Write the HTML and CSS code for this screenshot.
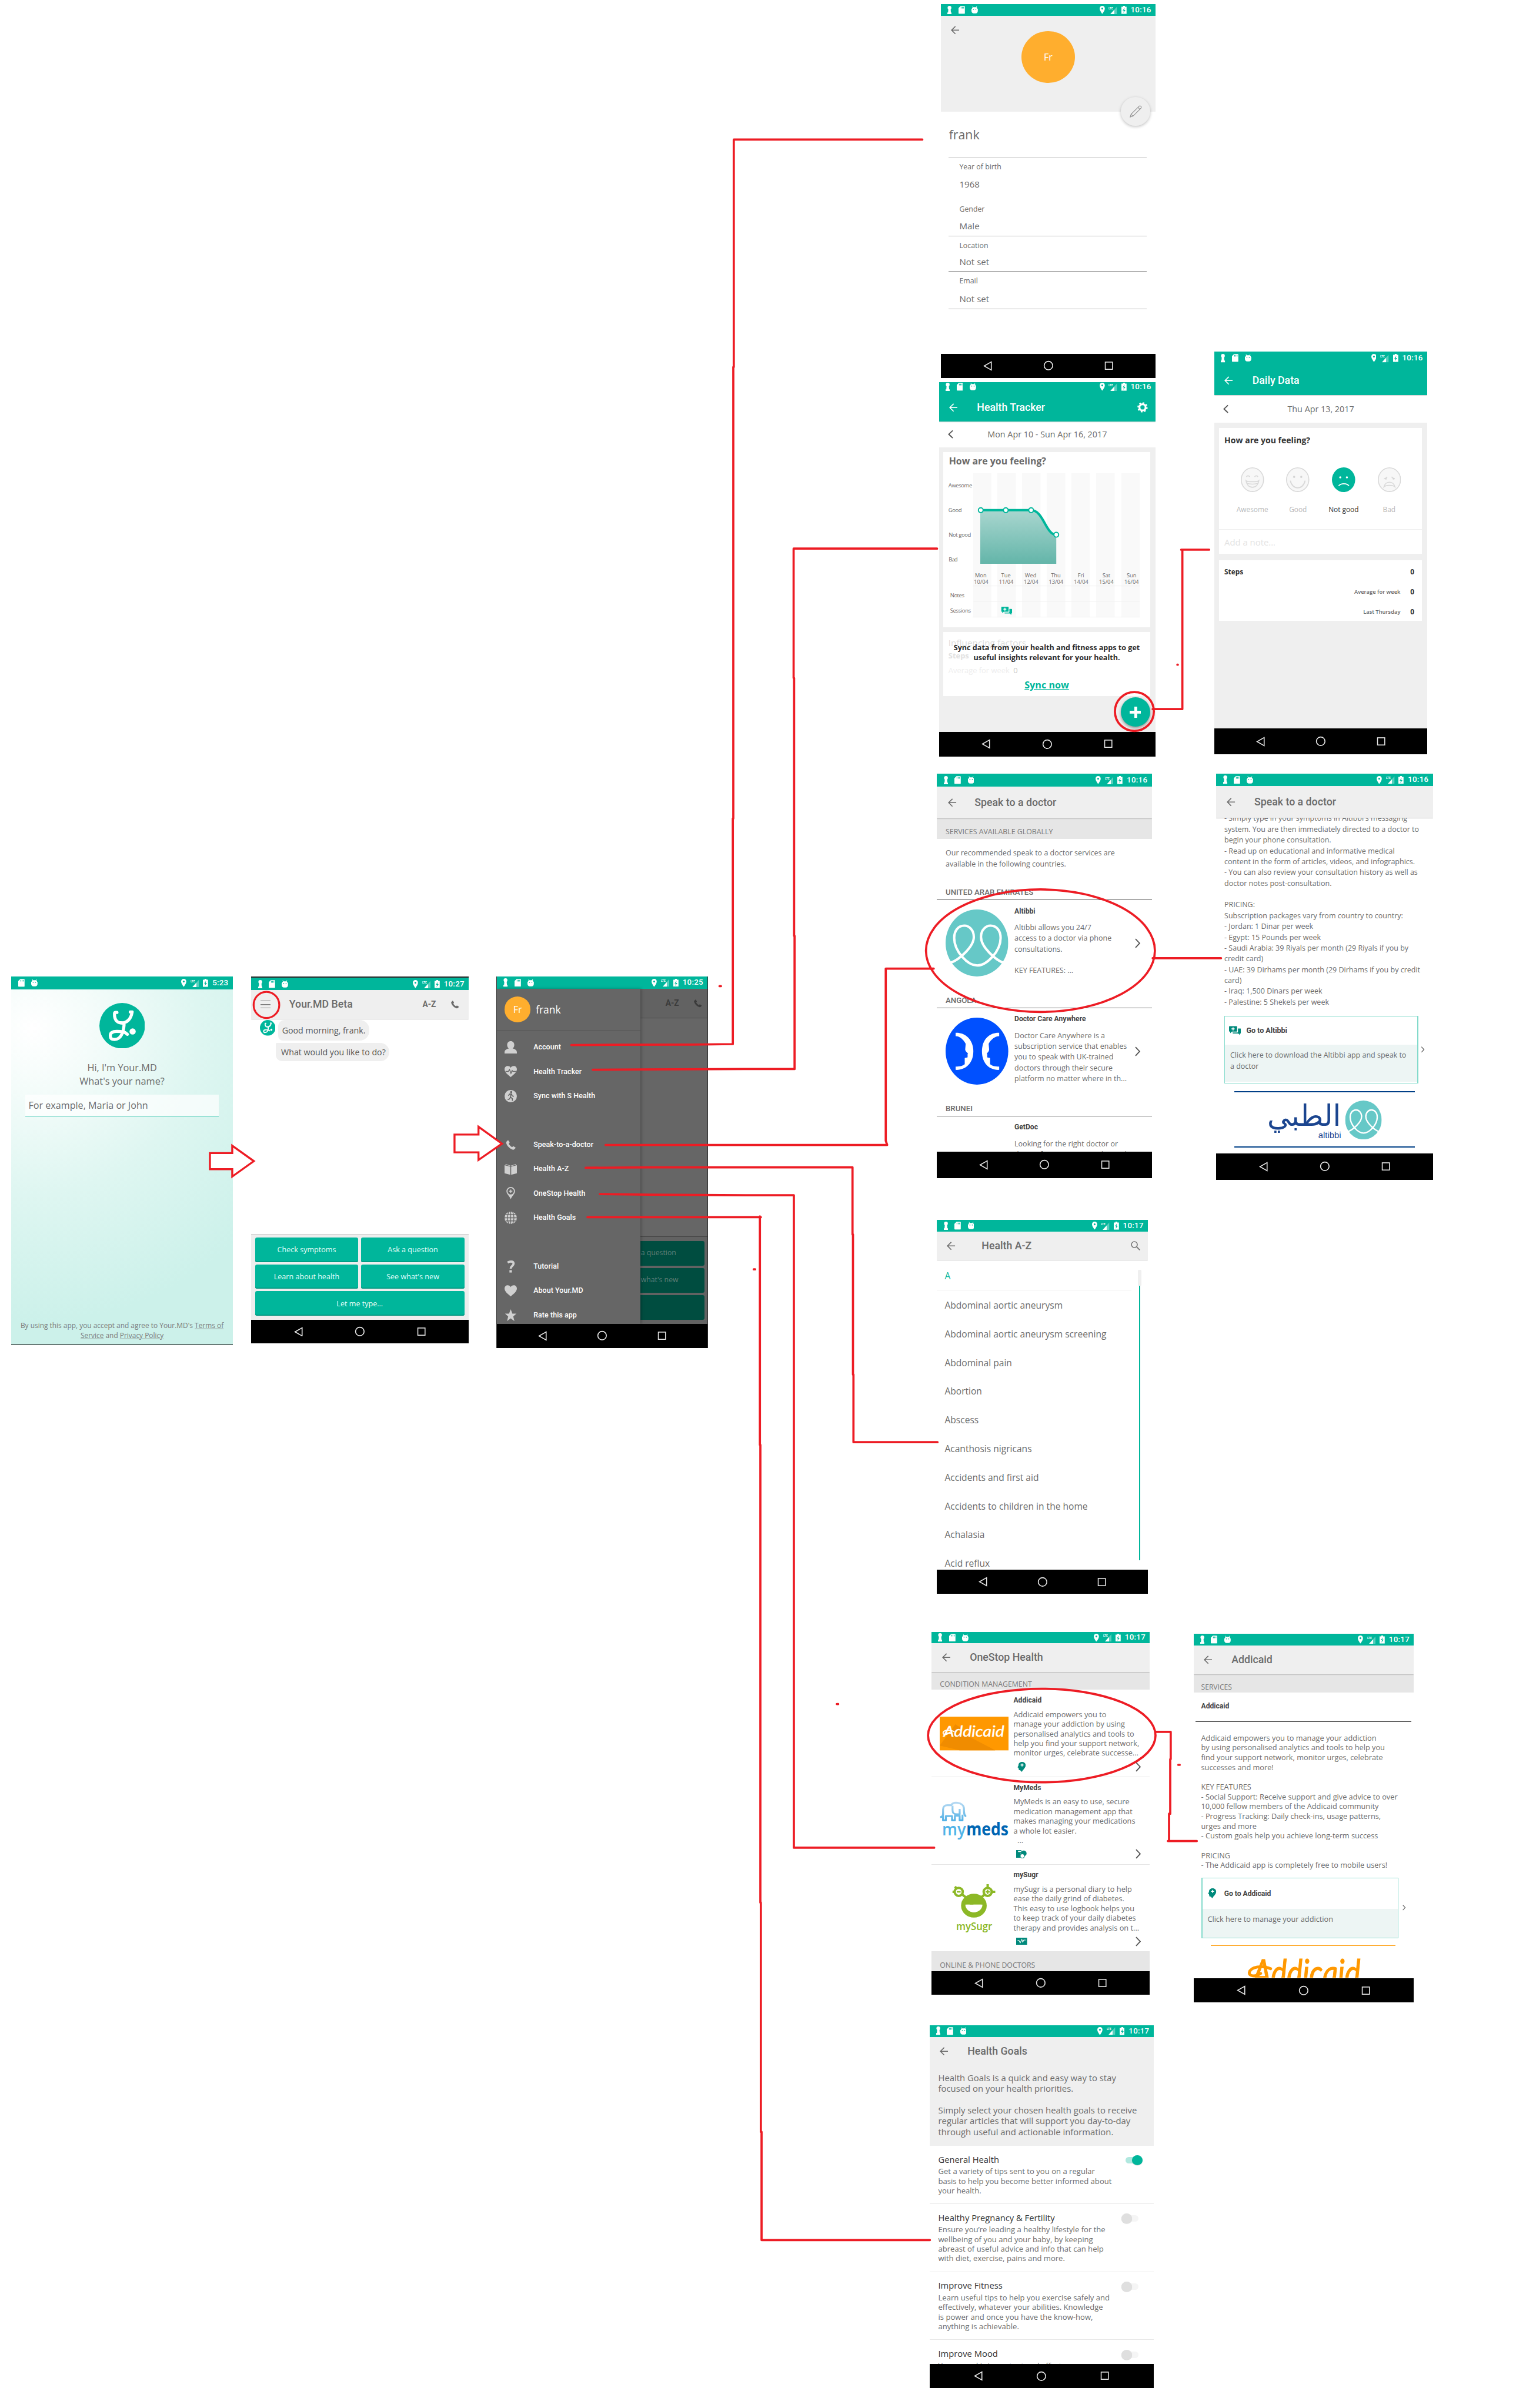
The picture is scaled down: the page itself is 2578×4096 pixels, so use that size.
FILE: index.html
```html
<!DOCTYPE html>
<html lang="en">
<head>
<meta charset="utf-8">
<title>Your.MD screen flow</title>
<link rel="stylesheet" href="styles.css">
</head>
<body>
<svg class="defs" aria-hidden="true">
  <defs>
    <symbol id="key" viewBox="0 0 9 18"><path fill="currentColor" d="M4.500 0a4 4 0 0 1 4 4c0 2-1 3-1.500 3.500L7.500 14H9v4H0v-4h1.500L2 7.500C1.500 7 .5 6 .5 4a4 4 0 0 1 4-4z"/></symbol>
    <symbol id="sd" viewBox="0 0 14 17"><path fill="currentColor" fill-rule="evenodd" d="M4.500 0H13l1 1v15l-1 1H1l-1-1V4.500zM5 2v3.500h1.300V2zm2.800 0v3.500h1.300V2zm2.800 0v3.500h1.300V2z"/></symbol>
    <symbol id="droid" viewBox="0 0 14 17"><path fill="currentColor" fill-rule="evenodd" d="M2.500 0l1.500 2.500h6L11.500 0l.6.500L11 3c1.500.8 2 2 2 3h1v4.500c0 3-2 5.500-5 5.500H5c-3 0-5-2.500-5-5.500V6h1c0-1 .5-2.200 2-3L1.900.5zM3.500 6v2h1.800V6zm5.200 0v2h1.800V6z"/></symbol>
    <symbol id="pin" viewBox="0 0 11 17"><path fill="currentColor" fill-rule="evenodd" d="M5.500 0C8.600 0 11 2.500 11 5.700 11 10 5.500 17 5.500 17S0 10 0 5.700C0 2.500 2.400 0 5.500 0zm0 3.700a2 2 0 1 0 0 4 2 2 0 0 0 0-4z"/></symbol>
    <symbol id="lte" viewBox="0 0 19 18"><path fill="currentColor" opacity=".35" d="M19 1v17H4z"/><path fill="currentColor" d="M13 8v10H4z"/><text x="0" y="8" font-family="Roboto" font-weight="700" font-size="8" fill="currentColor" textLength="10" lengthAdjust="spacingAndGlyphs">LTE</text></symbol>
    <symbol id="bat" viewBox="0 0 11 17"><path fill="currentColor" fill-rule="evenodd" d="M3.500 0h4v1.800H11V17H0V1.800h3.500zM6.800 4L2.500 10h2.700L4 15l4.600-6.200H5.800z"/></symbol>
    <symbol id="n-back" viewBox="0 0 19 21"><path fill="none" stroke="#e6e6e6" stroke-width="2" d="M17 2v17L2 10.500z"/></symbol>
    <symbol id="n-home" viewBox="0 0 22 22"><circle cx="11" cy="11" r="9" fill="none" stroke="#e6e6e6" stroke-width="2"/></symbol>
    <symbol id="n-recent" viewBox="0 0 20 20"><rect x="2" y="2" width="16" height="16" fill="none" stroke="#e6e6e6" stroke-width="2"/></symbol>
    <symbol id="back" viewBox="0 0 18 18"><path fill="none" stroke="currentColor" stroke-width="2" d="M17.500 9H2M9.500 1L1.500 9l8 8"/></symbol>
    <symbol id="right" viewBox="0 0 12 22"><path fill="none" stroke="#555" stroke-width="2.400" d="M1 1.500L10 11l-9 9.500"/></symbol>
    <symbol id="left" viewBox="0 0 12 20"><path fill="none" stroke="#555" stroke-width="2.600" d="M11 1.500L2 10l9 8.500"/></symbol>
    <symbol id="phone" viewBox="0 0 20 20"><path fill="currentColor" d="M1 3.500L3.500 1c.6-.5 1.200-.3 1.600.3l2 3.200c.4.700.2 1.200-.3 1.800L5.600 7.600c1.500 3 3.800 5.300 6.800 6.800l1.300-1.200c.6-.5 1.100-.7 1.800-.3l3.200 2c.6.4.8 1 .3 1.600L16.500 19c-.8.800-2 .8-3.200.4C7 17 3 13 .6 6.700.2 5.500.2 4.300 1 3.500z"/></symbol>
    <symbol id="chat" viewBox="0 0 25 19"><path fill="currentColor" fill-rule="evenodd" d="M1.500 0h14c1 0 1.500.5 1.500 1.500V10c0 1-.5 1.500-1.500 1.500H6L2.500 15v-3.500h-1C.5 11.500 0 11 0 10V1.500C0 .5.500 0 1.500 0zM7.500 2.500v2.300H5.200v2h2.300V9h2V6.800h2.300v-2H9.500V2.500z"/><path fill="currentColor" d="M18.800 5H23.500c1 0 1.500.5 1.500 1.500V14c0 1-.5 1.500-1.500 1.500H23V19l-3.500-3.500H9c-1 0-1.400-.5-1.400-1.500v-.7h9.700c1 0 1.500-.5 1.500-1.500z"/></symbol>
    <symbol id="head" viewBox="0 0 18 22"><path fill="currentColor" fill-rule="evenodd" d="M10 0c5 0 8 3.500 8 7.500 0 4-3 6.500-4.500 9L12 18l-2.500 4L6 18.500l-3-.5-.5-3-.5-2-2-1 2-4C2 3 5 0 10 0zM9 3.500v2.300H6.700v2H9V10h2V7.800h2.300v-2H11V3.500z"/></symbol>
    <symbol id="ymd" viewBox="0 0 96 96"><circle cx="48" cy="48" r="48" fill="#00b69b"/><g fill="none" stroke="#fff" stroke-width="6.500" stroke-linecap="round" stroke-linejoin="round"><path d="M37 20h-3c-3 0-2 4-2 8 1 8 6 14 14 14 11 0 20-6 23-23h-4"/><path d="M46 42c2 0 6 1 6 4-1 14-6 31-20 31-6 0-9-2-9-8 0-7 7-9 14-9 9 0 16 0 22 6"/></g><circle cx="70" cy="60" r="6.500" fill="#fff"/></symbol>
    <symbol id="altibbi" viewBox="0 0 131 141" preserveAspectRatio="none"><ellipse cx="65.500" cy="70.500" rx="65.500" ry="70.500" fill="#66c8c7"/><path fill="none" stroke="#fff" stroke-width="5" d="M11 112c15-5 48-32 48-54 0-15-10-24-20-24-12 0-21 10-21 26 0 28 28 58 48 58s49-30 49-58c0-16-9-26-21-26-10 0-20 9-20 24 0 22 31 48 46 54"/></symbol>
  </defs>
</svg>

<main class="board">

<section class="phone p-welcome">
  <div class="status"><span class="sl"><svg class="i-sd"><use href="#sd"/></svg><svg class="i-sd"><use href="#droid"/></svg></span><span class="sr"><svg class="i-pin"><use href="#pin"/></svg><svg class="i-lte"><use href="#lte"/></svg><svg class="i-pin"><use href="#bat"/></svg><b>5:23</b></span></div>
  <svg class="logo"><use href="#ymd"/></svg>
  <p class="hello">Hi, I'm Your.MD<br>What's your name?</p>
  <div class="name-input">For example, Maria or John</div>
  <p class="terms">By using this app, you accept and agree to Your.MD's <u>Terms of<br>Service</u> and <u>Privacy Policy</u></p>
</section>

<section class="phone p-chat">
  <div class="status"><span class="sl"><svg class="i-key"><use href="#key"/></svg><svg class="i-sd"><use href="#sd"/></svg><svg class="i-sd"><use href="#droid"/></svg></span><span class="sr"><svg class="i-pin"><use href="#pin"/></svg><svg class="i-lte"><use href="#lte"/></svg><svg class="i-pin"><use href="#bat"/></svg><b>10:27</b></span></div>
  <header class="bar"><i class="burger"></i><h1>Your.MD Beta</h1><b class="az">A-Z</b><svg class="i-phone"><use href="#phone"/></svg></header>
  <div class="talk">
    <svg class="avatar"><use href="#ymd"/></svg>
    <div class="bubbles"><p class="b1">Good morning, frank.</p><p class="b2">What would you like to do?</p></div>
  </div>
  <div class="choices"><span>Check symptoms</span><span>Ask a question</span><span>Learn about health</span><span>See what's new</span><span class="wide">Let me type...</span></div>
  <footer class="nav"><svg class="n1"><use href="#n-back"/></svg><svg class="n2"><use href="#n-home"/></svg><svg class="n3"><use href="#n-recent"/></svg></footer>
</section>

<section class="phone p-menu">
  <div class="status"><span class="sl"><svg class="i-key"><use href="#key"/></svg><svg class="i-sd"><use href="#sd"/></svg><svg class="i-sd"><use href="#droid"/></svg></span><span class="sr"><svg class="i-pin"><use href="#pin"/></svg><svg class="i-lte"><use href="#lte"/></svg><svg class="i-pin"><use href="#bat"/></svg><b>10:25</b></span></div>
  <div class="split">
    <div class="drawer">
      <div class="who"><span class="fr">Fr</span>frank</div>
      <ul>
        <li><svg viewBox="0 0 26 26"><path fill="#d0d0d0" d="M13 0c4.500 0 7.500 3 7.500 8 0 3-1.500 6-3.500 7.500 5 1 9 3.500 9 8V26H0v-2.500c0-4.500 4-7 9-8C7 14 5.500 11 5.500 8c0-5 3-8 7.500-8z"/></svg>Account</li>
        <li><svg viewBox="0 0 26 26"><path fill="#d0d0d0" d="M13 25C8 21 0 15 0 8.500 0 4 3.200 1.500 6.500 1.500c3 0 5.500 1.500 6.500 4 1-2.500 3.500-4 6.500-4 3.300 0 6.500 2.500 6.500 7C26 15 18 21 13 25z"/><path fill="none" stroke="#666" stroke-width="1.800" d="M2 13h6l2.500-4 3 8 2.500-6 1.500 2H24"/></svg>Health Tracker</li>
        <li><svg viewBox="0 0 26 26"><circle cx="13" cy="13" r="13" fill="#d0d0d0"/><circle cx="14" cy="4.500" r="2.200" fill="#666"/><path fill="none" stroke="#666" stroke-width="2" d="M8 12l3-3.500h4l1 4 3.500 1M13.500 9l-1 6 4 3.500V23M12.500 15l-2 4-4 1.500"/></svg>Sync with S Health</li>
        <li class="gap"><svg viewBox="0 0 26 26"><g color="#d0d0d0"><use href="#phone" x="3" y="2" width="21" height="22"/></g></svg>Speak-to-a-doctor</li>
        <li><svg viewBox="0 0 26 26"><path fill="#d0d0d0" d="M0 5l12 3v17L0 22zM26 5L14 8v17l12-3zM2 2.500L12.500 6l-1 .5L2 4zM24 2.500L13.500 6l1 .5L24 4z"/></svg>Health A-Z</li>
        <li><svg viewBox="0 0 26 26"><path fill="#d0d0d0" fill-rule="evenodd" d="M13 0a9 9 0 0 1 9 9c0 6-6 9-9 17C10 18 4 15 4 9a9 9 0 0 1 9-9zm0 2.200A6.800 6.800 0 0 0 6.200 9 6.800 6.800 0 0 0 13 15.800 6.800 6.800 0 0 0 19.800 9 6.800 6.800 0 0 0 13 2.200zM12 5.500h2V8h2.500v2H14v2.500h-2V10H9.500V8H12z"/></svg>OneStop Health</li>
        <li><svg viewBox="0 0 26 26"><circle cx="13" cy="13" r="13" fill="#d0d0d0"/><path fill="none" stroke="#666" stroke-width="1.600" d="M13 0v26M0 13h26M2 6.500h22M2 19.500h22M9 0C5.500 8 5.500 18 9 26M17 0c3.500 8 3.500 18 0 26"/></svg>Health Goals</li>
        <li class="gap"><svg viewBox="0 0 26 26"><path fill="none" stroke="#d0d0d0" stroke-width="4.600" d="M6.500 4.500C9 2.800 11 2.300 13.500 2.300c3.500 0 5.500 1.500 5.500 4.500 0 4.500-6 4.500-6 10.700"/><rect x="10.300" y="20.500" width="5.200" height="5" fill="#d0d0d0"/></svg>Tutorial</li>
        <li><svg viewBox="0 0 26 26"><path fill="#d0d0d0" d="M13 25C8 21 0 15 0 8.500 0 4 3.200 1.500 6.500 1.500c3 0 5.500 1.500 6.500 4 1-2.500 3.500-4 6.500-4 3.300 0 6.500 2.500 6.500 7C26 15 18 21 13 25z"/></svg>About Your.MD</li>
        <li><svg viewBox="0 0 26 26"><path fill="#d0d0d0" d="M13 0l3.500 9.300H25l-6.700 6L20.800 25 13 19.300 5.200 25l2.500-9.700L1 9.300h8.500z"/></svg>Rate this app</li>
      </ul>
    </div>
    <div class="dim">
      <div class="dimbar"><b>A-Z</b><svg class="i-phone"><use href="#phone"/></svg></div>
      <div class="dimbtns"><span>a question</span><span>what's new</span><span></span></div>
    </div>
  </div>
  <footer class="nav"><svg class="n1"><use href="#n-back"/></svg><svg class="n2"><use href="#n-home"/></svg><svg class="n3"><use href="#n-recent"/></svg></footer>
</section>

<section class="phone p-profile">
  <div class="status"><span class="sl"><svg class="i-key"><use href="#key"/></svg><svg class="i-sd"><use href="#sd"/></svg><svg class="i-sd"><use href="#droid"/></svg></span><span class="sr"><svg class="i-pin"><use href="#pin"/></svg><svg class="i-lte"><use href="#lte"/></svg><svg class="i-pin"><use href="#bat"/></svg><b>10:16</b></span></div>
  <div class="hero"><svg class="i-back"><use href="#back"/></svg><span class="fr">Fr</span>
    <span class="edit"><svg viewBox="0 0 26 26"><path fill="none" stroke="#8c8c8c" stroke-width="1.300" d="M1 25l2-6L20 2c2-2 6 1 4 4L7 23zM3 19l4 4M17.500 4.500l4 4"/></svg></span>
  </div>
  <h2>frank</h2>
  <dl>
    <div class="f1"><dt>Year of birth</dt><dd>1968</dd></div>
    <div class="f2"><dt>Gender</dt><dd>Male</dd></div>
    <div class="f3"><dt>Location</dt><dd>Not set</dd></div>
    <div class="f4"><dt>Email</dt><dd>Not set</dd></div>
  </dl>
  <footer class="nav"><svg class="n1"><use href="#n-back"/></svg><svg class="n2"><use href="#n-home"/></svg><svg class="n3"><use href="#n-recent"/></svg></footer>
</section>

<section class="phone p-tracker">
  <div class="status"><span class="sl"><svg class="i-key"><use href="#key"/></svg><svg class="i-sd"><use href="#sd"/></svg><svg class="i-sd"><use href="#droid"/></svg></span><span class="sr"><svg class="i-pin"><use href="#pin"/></svg><svg class="i-lte"><use href="#lte"/></svg><svg class="i-pin"><use href="#bat"/></svg><b>10:16</b></span></div>
  <header class="bar green"><svg class="i-back"><use href="#back"/></svg><h1>Health Tracker</h1><svg class="gear" viewBox="0 0 22 22"><circle cx="11" cy="11" r="6.500" fill="none" stroke="#fff" stroke-width="4"/><circle cx="11" cy="11" r="9.300" fill="none" stroke="#fff" stroke-width="3" stroke-dasharray="3.650 3.650"/></svg></header>
  <div class="date"><svg class="i-left"><use href="#left"/></svg><span>Mon Apr 10 - Sun Apr 16, 2017</span></div>
  <div class="cards">
    <div class="card feel">
      <h3>How are you feeling?</h3>
      <svg class="chart" viewBox="9 185 436 331">
        <defs><linearGradient id="mood" x1="0" y1="0" x2="0" y2="1"><stop offset="0" stop-color="#a9d6cf"/><stop offset="1" stop-color="#63b5a9"/></linearGradient></defs>
        <g fill="#f9f9f9"><rect x="72" y="191" width="38" height="304"/><rect x="123" y="191" width="39" height="304"/><rect x="175" y="191" width="39" height="304"/><rect x="227" y="191" width="39" height="304"/><rect x="279" y="191" width="39" height="304"/><rect x="331" y="191" width="39" height="304"/><rect x="384" y="191" width="39" height="304"/></g>
        <path stroke="#eee" stroke-width="1" d="M71 428.500h352M73 461h350M71 494h352"/>
        <path fill="url(#mood)" d="M87 269H194C220 269 225 321 247 321V382H87z"/>
        <path fill="none" stroke="#00b69b" stroke-width="5" d="M88 269H194C220 269 225 321 247 321"/>
        <g fill="#fff" stroke="#00b69b" stroke-width="2.400"><circle cx="88" cy="269" r="5"/><circle cx="140.700" cy="269" r="5"/><circle cx="194" cy="269" r="5"/><circle cx="247" cy="320.700" r="5"/></g>
        <g class="lbl"><text x="20" y="221" textLength="50">Awesome</text><text x="20" y="273" textLength="28">Good</text><text x="20.500" y="325" textLength="47">Not good</text><text x="20.500" y="377" textLength="19">Bad</text><text x="23.500" y="452" textLength="30">Notes</text><text x="23.500" y="485" textLength="44">Sessions</text></g>
        <g class="lbl mid"><text x="88" y="410">Mon</text><text x="89" y="424">10/04</text><text x="141" y="410">Tue</text><text x="141.500" y="424">11/04</text><text x="193" y="410">Wed</text><text x="194" y="424">12/04</text><text x="246" y="410">Thu</text><text x="246.500" y="424">13/04</text><text x="299" y="410">Fri</text><text x="299.500" y="424">14/04</text><text x="352.500" y="410">Sat</text><text x="352.500" y="424">15/04</text><text x="405.500" y="410">Sun</text><text x="405.500" y="424">16/04</text></g>
        <g color="#00b69b"><use href="#chat" x="131" y="472" width="23" height="18"/></g>
      </svg>
    </div>
    <div class="card sync">
      <div class="ghost"><p>Influencing factors</p><b>Steps</b><p class="avg">Average for week <i>0</i></p></div>
      <div class="over"><p>Sync data from your health and fitness apps to get<br>useful insights relevant for your health.</p><a>Sync now</a></div>
    </div>
    <span class="fab"></span>
  </div>
  <footer class="nav"><svg class="n1"><use href="#n-back"/></svg><svg class="n2"><use href="#n-home"/></svg><svg class="n3"><use href="#n-recent"/></svg></footer>
</section>

<section class="phone p-daily">
  <div class="status"><span class="sl"><svg class="i-key"><use href="#key"/></svg><svg class="i-sd"><use href="#sd"/></svg><svg class="i-sd"><use href="#droid"/></svg></span><span class="sr"><svg class="i-pin"><use href="#pin"/></svg><svg class="i-lte"><use href="#lte"/></svg><svg class="i-pin"><use href="#bat"/></svg><b>10:16</b></span></div>
  <header class="bar green"><svg class="i-back"><use href="#back"/></svg><h1>Daily Data</h1></header>
  <div class="date"><svg class="i-left"><use href="#left"/></svg><span>Thu Apr 13, 2017</span></div>
  <div class="cards">
    <div class="card mood">
      <h3>How are you feeling?</h3>
      <div class="faces">
        <div><svg viewBox="0 0 49 52"><ellipse cx="24.500" cy="26" rx="23.500" ry="25" fill="#f7f7f7" stroke="#d9d9d9" stroke-width="2"/><path fill="none" stroke="#d9d9d9" stroke-width="2" d="M12 20c1-3 5-3 7 0M29 20c2-3 6-3 7 0M11 28c3 3 24 3 27 0-1 8-6 14-13.500 14S12 36 11 28zM13 33c4 3 19 3 23 0"/></svg>Awesome</div>
        <div><svg viewBox="0 0 49 52"><ellipse cx="24.500" cy="26" rx="23.500" ry="25" fill="#f7f7f7" stroke="#d9d9d9" stroke-width="2"/><circle cx="17" cy="20" r="2.200" fill="#d4d4d4"/><circle cx="32" cy="20" r="2.200" fill="#d4d4d4"/><path fill="none" stroke="#d9d9d9" stroke-width="2.400" d="M9 28c4 20 27 20 31 0"/></svg>Good</div>
        <div class="on"><svg viewBox="0 0 49 52"><ellipse cx="24.500" cy="26" rx="24.500" ry="26" fill="#00b69b"/><circle cx="17.500" cy="21" r="2.200" fill="#fff"/><circle cx="31.500" cy="21" r="2.200" fill="#fff"/><path fill="none" stroke="#fff" stroke-width="2" d="M14 39c5-6 17-6 22 0"/></svg>Not good</div>
        <div><svg viewBox="0 0 49 52"><ellipse cx="24.500" cy="26" rx="23.500" ry="25" fill="#f7f7f7" stroke="#d9d9d9" stroke-width="2"/><path fill="none" stroke="#d9d9d9" stroke-width="2" d="M13 24c2 0 5-2 7-4M29 20c2 2 4 4 7 4M13 41c3-13 20-13 23 0-4-4-19-4-23 0z"/><circle cx="17" cy="24" r="1.800" fill="#d4d4d4"/><circle cx="33" cy="24" r="1.800" fill="#d4d4d4"/></svg>Bad</div>
      </div>
      <p class="note">Add a note...</p>
    </div>
    <div class="card steps">
      <div class="s0"><b>Steps</b><b>0</b></div>
      <div><span>Average for week</span><b>0</b></div>
      <div><span>Last Thursday</span><b>0</b></div>
    </div>
  </div>
  <footer class="nav"><svg class="n1"><use href="#n-back"/></svg><svg class="n2"><use href="#n-home"/></svg><svg class="n3"><use href="#n-recent"/></svg></footer>
</section>

<section class="phone p-doctor">
  <div class="status"><span class="sl"><svg class="i-key"><use href="#key"/></svg><svg class="i-sd"><use href="#sd"/></svg><svg class="i-sd"><use href="#droid"/></svg></span><span class="sr"><svg class="i-pin"><use href="#pin"/></svg><svg class="i-lte"><use href="#lte"/></svg><svg class="i-pin"><use href="#bat"/></svg><b>10:16</b></span></div>
  <header class="bar"><svg class="i-back"><use href="#back"/></svg><h1>Speak to a doctor</h1></header>
  <div class="band">SERVICES AVAILABLE GLOBALLY</div>
  <p class="intro">Our recommended speak to a doctor services are<br>available in the following countries.</p>
  <div class="scroll">
    <h4 class="first">UNITED ARAB EMIRATES</h4>
    <article><svg class="round"><use href="#altibbi"/></svg><div class="txt"><h5>Altibbi</h5><p>Altibbi allows you 24/7<br>access to a doctor via phone<br>consultations.<br><br>KEY FEATURES: ...</p></div><svg class="i-right"><use href="#right"/></svg></article>
    <h4>ANGOLA</h4>
    <article><svg class="round" viewBox="0 0 131 141" preserveAspectRatio="none"><ellipse cx="65.500" cy="70.500" rx="65.500" ry="70.500" fill="#0050ff"/><path fill="#fff" d="M21 32c20-1 37 14 37 39S42 111 21 110v-7c8 0 14-1 19-5l0-13c2-1 6 0 6-2v-6l1-1c-3-4-6-5-6-9l1-12c-5-9-12-16-21-16zM112 32C92 31 76 46 76 71s15 40 36 39v-7c-8 0-14-1-19-5l0-13c-2-1-6 0-6-2v-6l-1-1c3-4 5-5 5-9l-1-12c5-9 13-16 22-16z"/></svg><div class="txt"><h5>Doctor Care Anywhere</h5><p>Doctor Care Anywhere is a<br>subscription service that enables<br>you to speak with UK-trained<br>doctors through their secure<br>platform no matter where in th...</p></div><svg class="i-right"><use href="#right"/></svg></article>
    <h4>BRUNEI</h4>
    <article><span class="round"></span><div class="txt"><h5>GetDoc</h5><p>Looking for the right doctor or<br>dentist for your care needs? Find</p></div></article>
  </div>
  <footer class="nav"><svg class="n1"><use href="#n-back"/></svg><svg class="n2"><use href="#n-home"/></svg><svg class="n3"><use href="#n-recent"/></svg></footer>
</section>

<section class="phone p-altibbi">
  <div class="status"><span class="sl"><svg class="i-key"><use href="#key"/></svg><svg class="i-sd"><use href="#sd"/></svg><svg class="i-sd"><use href="#droid"/></svg></span><span class="sr"><svg class="i-pin"><use href="#pin"/></svg><svg class="i-lte"><use href="#lte"/></svg><svg class="i-pin"><use href="#bat"/></svg><b>10:16</b></span></div>
  <header class="bar"><svg class="i-back"><use href="#back"/></svg><h1>Speak to a doctor</h1></header>
  <div class="scroll">
    <p class="copy">- Simply type in your symptoms in Altibbi's messaging<br>system. You are then immediately directed to a doctor to<br>begin your phone consultation.<br>- Read up on educational and informative medical<br>content in the form of articles, videos, and infographics.<br>- You can also review your consultation history as well as<br>doctor notes post-consultation.<br><br>PRICING:<br>Subscription packages vary from country to country:<br>- Jordan: 1 Dinar per week<br>- Egypt: 15 Pounds per week<br>- Saudi Arabia: 39 Riyals per month (29 Riyals if you by<br>credit card)<br>- UAE: 39 Dirhams per month (29 Dirhams if you by credit<br>card)<br>- Iraq: 1,500 Dinars per week<br>- Palestine: 5 Shekels per week</p>
    <div class="go"><div class="gobox"><h5><svg class="i-chat"><use href="#chat"/></svg>Go to Altibbi</h5><p>Click here to download the Altibbi app and speak to<br>a doctor</p></div><svg class="i-right"><use href="#right"/></svg></div>
    <div class="brand">
      <svg viewBox="0 0 242 82"><text x="155" y="53" font-family="'DejaVu Sans'" font-size="62" fill="#1b458f" text-anchor="start" direction="rtl" textLength="155" lengthAdjust="spacingAndGlyphs">الطبي</text><text x="107.500" y="79" font-family="'Liberation Sans'" font-size="17" fill="#1b458f" textLength="48" lengthAdjust="spacingAndGlyphs">altibbi</text><use href="#altibbi" x="164" y="0" width="77" height="82"/></svg>
    </div>
  </div>
  <footer class="nav"><svg class="n1"><use href="#n-back"/></svg><svg class="n2"><use href="#n-home"/></svg><svg class="n3"><use href="#n-recent"/></svg></footer>
</section>

<section class="phone p-az">
  <div class="status"><span class="sl"><svg class="i-key"><use href="#key"/></svg><svg class="i-sd"><use href="#sd"/></svg><svg class="i-sd"><use href="#droid"/></svg></span><span class="sr"><svg class="i-pin"><use href="#pin"/></svg><svg class="i-lte"><use href="#lte"/></svg><svg class="i-pin"><use href="#bat"/></svg><b>10:17</b></span></div>
  <header class="bar"><svg class="i-back"><use href="#back"/></svg><h1>Health A-Z</h1><svg class="search" viewBox="0 0 20 20"><circle cx="7.500" cy="7.500" r="6.200" fill="none" stroke="#777" stroke-width="2"/><path stroke="#777" stroke-width="2.400" d="M12 12l7 7"/></svg></header>
  <div class="azbody">
    <ul><li class="letter">A</li><li>Abdominal aortic aneurysm</li><li>Abdominal aortic aneurysm screening</li><li>Abdominal pain</li><li>Abortion</li><li>Abscess</li><li>Acanthosis nigricans</li><li>Accidents and first aid</li><li>Accidents to children in the home</li><li>Achalasia</li><li>Acid reflux</li></ul>
    <div class="track"><i></i></div>
  </div>
  <footer class="nav"><svg class="n1"><use href="#n-back"/></svg><svg class="n2"><use href="#n-home"/></svg><svg class="n3"><use href="#n-recent"/></svg></footer>
</section>

<section class="phone p-onestop">
  <div class="status"><span class="sl"><svg class="i-key"><use href="#key"/></svg><svg class="i-sd"><use href="#sd"/></svg><svg class="i-sd"><use href="#droid"/></svg></span><span class="sr"><svg class="i-pin"><use href="#pin"/></svg><svg class="i-lte"><use href="#lte"/></svg><svg class="i-pin"><use href="#bat"/></svg><b>10:17</b></span></div>
  <header class="bar"><svg class="i-back"><use href="#back"/></svg><h1>OneStop Health</h1></header>
  <div class="band">CONDITION MANAGEMENT</div>
  <article>
    <svg class="pic" viewBox="0 0 145 184"><rect y="57" width="145" height="71" fill="#ff9800"/><path fill="#f08c00" d="M0 118l33-45 12 8 5 12 67 35H42z"/><text x="8" y="99" font-family="Lato" font-style="italic" font-weight="400" font-size="32" fill="#fff" stroke="#fff" stroke-width=".5" textLength="128" lengthAdjust="spacingAndGlyphs">Addicaid</text><path fill="none" stroke="#fff" stroke-width="2.200" stroke-linecap="round" d="M30 88C20 84 8 85 7 91c0 5 8 5 14-1"/></svg>
    <div class="txt"><h5>Addicaid</h5><p>Addicaid empowers you to<br>manage your addiction by using<br>personalised analytics and tools to<br>help you find your support network,<br>monitor urges, celebrate successe...</p><div class="row"><svg class="i-head"><use href="#head"/></svg><svg class="i-right"><use href="#right"/></svg></div></div>
  </article>
  <article>
    <svg class="pic" viewBox="0 0 145 184"><defs><linearGradient id="ele" x1="0" y1="0" x2="0" y2="1"><stop offset="0" stop-color="#b5d9f2"/><stop offset="1" stop-color="#55b2e6"/></linearGradient></defs><path fill="none" stroke="url(#ele)" stroke-width="4" stroke-linejoin="round" d="M1 84c4 0 6-2 6-8V68c0-6 4-9 9-9h8c3-5 8-6 14-5 7 1 13 5 13 12 0 8 0 16 5 16M7 76v15h6v-9h13v9h6V81h10v10h6V79M27 60v9c0 8 4 9 9 9h6V67"/><text x="5" y="122" font-family="'Open Sans'" font-weight="600" font-size="36" fill="#4fb3e8" textLength="50" lengthAdjust="spacingAndGlyphs">my</text><text x="56" y="122" font-family="'Open Sans'" font-weight="700" font-size="37" fill="#0066b3" textLength="89" lengthAdjust="spacingAndGlyphs">meds</text></svg>
    <div class="txt"><h5>MyMeds</h5><p>MyMeds is an easy to use, secure<br>medication management app that<br>makes managing your medications<br>a whole lot easier.<br>&nbsp; ...</p><div class="row"><svg class="i-meds" viewBox="0 0 22 18"><path fill="#00897b" fill-rule="evenodd" d="M0 0h11v5l-2 3v8H0zM4 2v2h6V2z"/><circle cx="16" cy="7" r="6" fill="#00897b"/><circle cx="13" cy="12.500" r="4.500" fill="#fff" stroke="#00897b" stroke-width="1.400"/></svg><svg class="i-right"><use href="#right"/></svg></div></div>
  </article>
  <article>
    <svg class="pic" viewBox="0 0 145 184"><g fill="none" stroke="#8cb826"><ellipse cx="72" cy="86" rx="21.500" ry="19.500" stroke-width="11"/><circle cx="40" cy="57" r="8.500" stroke-width="5"/><circle cx="101" cy="57" r="8.500" stroke-width="5"/><path stroke-width="5" d="M27 57h6M32 46l4 4M48 63l10 8M101 41v6M109 57h8M94 63l-9 8"/><path stroke-width="3" d="M36 57h8M96.500 57h9M101 52.500v9"/></g><path fill="#8cb826" d="M54 71h36v13H54z"/><path fill="#fff" d="M54 84h9c1 5 7 5 8 0h19c0 9-8 16-18 16s-18-7-18-16z"/><text x="34.600" y="137" font-family="'Open Sans'" font-weight="600" font-size="22" fill="#8cb826" textLength="76" lengthAdjust="spacingAndGlyphs">mySugr</text></svg>
    <div class="txt"><h5>mySugr</h5><p>mySugr is a personal diary to help<br>ease the daily grind of diabetes.<br>This easy to use logbook helps you<br>to keep track of your daily diabetes<br>therapy and provides analysis on t...</p><div class="row"><svg class="i-pulse" viewBox="0 0 23 15"><rect width="23" height="15" fill="#00897b"/><path fill="none" stroke="#fff" stroke-width="1.300" d="M3 6h3l2.500 5L12 3.500l2 6 2-4.500h4"/></svg><svg class="i-right"><use href="#right"/></svg></div></div>
  </article>
  <div class="band last">ONLINE &amp; PHONE DOCTORS</div>
  <footer class="nav"><svg class="n1"><use href="#n-back"/></svg><svg class="n2"><use href="#n-home"/></svg><svg class="n3"><use href="#n-recent"/></svg></footer>
</section>

<section class="phone p-addicaid">
  <div class="status"><span class="sl"><svg class="i-key"><use href="#key"/></svg><svg class="i-sd"><use href="#sd"/></svg><svg class="i-sd"><use href="#droid"/></svg></span><span class="sr"><svg class="i-pin"><use href="#pin"/></svg><svg class="i-lte"><use href="#lte"/></svg><svg class="i-pin"><use href="#bat"/></svg><b>10:17</b></span></div>
  <header class="bar"><svg class="i-back"><use href="#back"/></svg><h1>Addicaid</h1></header>
  <div class="band">SERVICES</div>
  <h5 class="head">Addicaid</h5>
  <div class="scroll">
    <p class="copy">Addicaid empowers you to manage your addiction<br>by using personalised analytics and tools to help you<br>find your support network, monitor urges, celebrate<br>successes and more!<br><br>KEY FEATURES<br>- Social Support: Receive support and give advice to over<br>10,000 fellow members of the Addicaid community<br>- Progress Tracking: Daily check-ins, usage patterns,<br>urges and more<br>- Custom goals help you achieve long-term success<br><br>PRICING<br>- The Addicaid app is completely free to mobile users!</p>
    <div class="go"><div class="gobox"><h5><svg class="i-head"><use href="#head"/></svg>Go to Addicaid</h5><p>Click here to manage your addiction</p></div><svg class="i-right"><use href="#right"/></svg></div>
    <div class="brand"><svg viewBox="0 0 388 66"><text x="88" y="84" font-family="Lato" font-style="italic" font-weight="400" font-size="76" fill="#ff9800" stroke="#ff9800" stroke-width="1.500" textLength="227" lengthAdjust="spacingAndGlyphs">Addicaid</text><path fill="none" stroke="#ff9800" stroke-width="6" stroke-linecap="round" d="M126 48C108 40 84 44 81 56c-1 8 12 10 24 2"/></svg></div>
  </div>
  <footer class="nav"><svg class="n1"><use href="#n-back"/></svg><svg class="n2"><use href="#n-home"/></svg><svg class="n3"><use href="#n-recent"/></svg></footer>
</section>

<section class="phone p-goals">
  <div class="status"><span class="sl"><svg class="i-key"><use href="#key"/></svg><svg class="i-sd"><use href="#sd"/></svg><svg class="i-sd"><use href="#droid"/></svg></span><span class="sr"><svg class="i-pin"><use href="#pin"/></svg><svg class="i-lte"><use href="#lte"/></svg><svg class="i-pin"><use href="#bat"/></svg><b>10:17</b></span></div>
  <div class="top">
    <header class="bar flat"><svg class="i-back"><use href="#back"/></svg><h1>Health Goals</h1></header>
    <p>Health Goals is a quick and easy way to stay<br>focused on your health priorities.</p>
    <p class="second">Simply select your chosen health goals to receive<br>regular articles that will support you day-to-day<br>through useful and actionable information.</p>
  </div>
  <div class="scroll">
    <div class="goal g1"><div><h5>General Health</h5><p>Get a variety of tips sent to you on a regular<br>basis to help you become better informed about<br>your health.</p></div><i class="toggle on"></i></div>
    <div class="goal g2"><div><h5>Healthy Pregnancy &amp; Fertility</h5><p>Ensure you’re leading a healthy lifestyle for the<br>wellbeing of you and your baby, by keeping<br>abreast of useful advice and info that can help<br>with diet, exercise, pains and more.</p></div><i class="toggle"></i></div>
    <div class="goal g3"><div><h5>Improve Fitness</h5><p>Learn useful tips to help you exercise safely and<br>effectively, whatever your abilities. Knowledge<br>is power and once you have the know-how,<br>anything is achievable.</p></div><i class="toggle"></i></div>
    <div class="goal g4"><div><h5>Improve Mood</h5><p>Your mood is important and affects your</p></div><i class="toggle"></i></div>
  </div>
  <footer class="nav"><svg class="n1"><use href="#n-back"/></svg><svg class="n2"><use href="#n-home"/></svg><svg class="n3"><use href="#n-recent"/></svg></footer>
</section>

<svg class="flow" viewBox="0 0 3192 5072">
  <g fill="none" stroke="#ed1c24" stroke-linecap="round" stroke-linejoin="round" stroke-width="4.600">
    <path d="M1203 2201l85-.5 168-.5 87-1V1724h1V773h1V294H1942"/>
    <path d="M1248 2253l106-.5 211-1H1673V1971h-1V1428h-1V1155.500H1973"/>
    <path d="M1275 2411.500H1868l-3-9V2040H1966"/>
    <path d="M1233 2459.500l141-1H1795V2600h1V2895h1V3037.500H1974"/>
    <path d="M1263 2515l103 1 204 1.500H1671.500V3891.500H1967"/>
    <path d="M1237 2563.500H1602M1600 2562V3043h1V4007h1V4490h1.500V4717.800H1958"/>
    <path d="M2427 1493.500H2489.500V1158M2487 1157.700H2546"/>
    <path d="M2427 2018H2571"/>
    <path d="M2433 3647.500H2465M2465 3648V3705h-1V3820h-2.500V3877.500M2459 3877.500H2520"/>
    <path fill="#fff" stroke-linejoin="miter" stroke-width="4.200" d="M442 2428.500H489V2413l45.500 32.500L489 2478V2462.500H442z"/>
    <path fill="#fff" stroke-linejoin="miter" stroke-width="4.200" d="M957 2389.500H1007.500V2373l49.500 35.700L1007.500 2443V2427H957z"/>
    <ellipse cx="561" cy="2116.600" rx="27" ry="27.500" stroke-width="4"/>
    <ellipse cx="2388.500" cy="1498.400" rx="41" ry="41"/>
    <ellipse cx="2190.700" cy="2002.300" rx="241" ry="129"/>
    <ellipse cx="2193.500" cy="3655.200" rx="239.500" ry="98.500"/>
    <path d="M1515 2077h3M1587 2673.500h3M1762 3589h3M2479 1400h1M2481 3717h3"/>
  </g>
</svg>
</main>
</body>
</html>
```
FILE: styles.css
```css
* { box-sizing: border-box; }
html, body { margin: 0; padding: 0; background: #fff; }
body { overflow: hidden; }
h1, h2, h3, h4, h5, p, ul, dl, dd { margin: 0; padding: 0; font-size: inherit; }
ul { list-style: none; }
svg { display: block; flex: none; }
.defs { position: absolute; width: 0; height: 0; }

.board { position: relative; width: 3192px; height: 5072px; zoom: 0.80764; overflow: hidden; }
.flow { position: absolute; inset: 0; z-index: 2; width: 3192px; height: 5072px; }

.phone {
  position: absolute; display: flex; flex-direction: column; overflow: hidden;
  background: #fff; color: #6b6b6b; white-space: nowrap;
  font-family: "Open Sans", "Noto Sans", sans-serif; font-size: 16px;
}
.p-welcome { left: 24px; top: 2056px; width: 466px; height: 777px; }
.p-chat { left: 529px; top: 2057px; width: 458px; height: 772px; }
.p-menu { left: 1045px; top: 2057px; width: 446px; height: 782px; }
.p-profile { left: 1981px; top: 9px; width: 452px; height: 787px; }
.p-tracker { left: 1977px; top: 805px; width: 456px; height: 788px; }
.p-daily { left: 2557px; top: 741px; width: 448px; height: 848px; }
.p-doctor { left: 1973px; top: 1629px; width: 452px; height: 852px; }
.p-altibbi { left: 2561px; top: 1629px; width: 456px; height: 856px; }
.p-az { left: 1973px; top: 2569px; width: 444px; height: 788px; }
.p-onestop { left: 1961px; top: 3437px; width: 460px; height: 764px; }
.p-addicaid { left: 2513px; top: 3441px; width: 464px; height: 776px; }
.p-goals { left: 1957px; top: 4265px; width: 472px; height: 764px; }

/* status bar */
.status {
  flex: none; height: 25px; padding: 0 9px 0 14px; background: #00b69b; color: #fff;
  display: flex; justify-content: space-between; align-items: center;
}
.status span { display: flex; align-items: center; }
.sl { gap: 14px; }
.sr { gap: 8.5px; }
.status b { font: 500 16.5px/20px Roboto, sans-serif; letter-spacing: .35px; }
.i-key { width: 9px; height: 18px; }
.i-sd { width: 13.5px; height: 17px; }
.i-pin { width: 11px; height: 17px; }
.i-lte { width: 18px; height: 18px; }

/* app bar */
.bar {
  position: relative; flex: none; height: 60px; padding: 0 24px 0 21px; display: flex; align-items: center;
  background: #efefef; color: #6b6b6b; box-shadow: 0 1px 2px rgba(0,0,0,.35);
}
.bar h1 { margin-left: 41px; font: 500 22px/28px Roboto, sans-serif; }
.bar.green { background: #00b69b; color: #fff; }
.bar.flat { box-shadow: none; }
.i-back { width: 18px; height: 18px; }
.i-phone { width: 17px; height: 19px; }
.i-right { width: 12px; height: 21px; }

/* navigation bar */
.nav {
  position: relative; flex: none; height: 51px; margin-top: auto; padding: 0 7.6%; background: #000;
  display: grid; grid-template-columns: repeat(3, 1fr); place-items: center;
}
.n1 { width: 19px; height: 21px; }
.n2 { width: 22px; height: 22px; }
.n3 { width: 19px; height: 20px; }

.band { flex: none; padding-left: 18px; background: #e6e6e6; font-size: 15px; color: #777; }
.scroll { flex: 1; min-height: 0; overflow: hidden; }
h5 { font: 700 15px/20px Roboto, sans-serif; color: #444; }
.fr { display: grid; place-items: center; border-radius: 50%; background: #ffae2e; color: #fff; }

/* welcome */
.p-welcome { background: radial-gradient(circle at 45px 110px, #fff 0, #f4fcfa 130px, #def6f1 350px, #ccf1ea 620px); border-bottom: 2px solid #000; }
.p-welcome .status { height: 28px; }
.logo { width: 96px; height: 96px; margin: 28px 0 0 185px; }
.hello { margin-top: 27px; text-align: center; font-size: 20.2px; line-height: 28px; }
.name-input { height: 45px; margin: 15px 29px 0; padding-left: 7px; background: rgba(255,255,255,.7); border-bottom: 2px solid #1cbda4; font-size: 20px; line-height: 46px; }
.terms { margin: auto 0 10px; text-align: center; font-size: 14.75px; line-height: 20.4px; color: #7a7a7a; }

/* chat */
.p-chat { border-top: 3px solid #2a2a2a; }
.p-chat .status { height: 26px; }
.burger { width: 21px; height: 15px; border: solid #777; border-width: 2px 0; background: linear-gradient(#777,#777) center / 100% 2px no-repeat; }
.p-chat .bar { padding: 0 20px; }
.p-chat .bar h1 { margin-left: 39px; }
.az { margin: 0 32px 0 auto; font: 700 17px/20px Roboto, sans-serif; }
.talk { flex: 1; display: flex; padding: 3px 0 0 18px; color: #555; }
.avatar { width: 33px; height: 33px; }
.bubbles p { background: #efefef; width: max-content; font-size: 17.6px; }
.b1 { margin-left: 6px; padding: 0 8px; line-height: 45px; height: 43px; border-radius: 14px 20px 20px 10px; margin-bottom: 5px; }
.b2 { margin-left: 1px; padding: 0 8px 0 11px; line-height: 40px; height: 39px; border-radius: 2px 20px 20px 14px; }
.choices { flex: none; height: 180px; padding: 5px 9px 0 8px; border-top: 2px solid #9a9a9a; background: #eee; display: grid; grid-template-columns: 1fr 1fr; grid-auto-rows: 52px; gap: 4.5px 6px; }
.choices span { display: grid; place-items: center; border-radius: 4px; background: #00b69b; box-shadow: inset 0 -2px #00937d; color: #e8fffb; font-size: 15.6px; }
.choices .wide { grid-column: 1 / 3; }
.p-chat .nav { height: 49px; }

/* side menu */
.p-menu { background: #666; border: solid #2b2b2b; border-width: 0 1px; }
.split { flex: 1; min-height: 0; display: flex; }
.drawer { position: relative; width: 302px; background: #666; box-shadow: 2px 0 6px rgba(0,0,0,.3); color: #fff; z-index: 1; }
.who { height: 88.500px; padding-left: 16px; display: flex; align-items: center; gap: 11px; border-bottom: 2px solid #575757; font-size: 21.5px; }
.who .fr { width: 55px; height: 54px; font-size: 20px; }
.drawer ul { padding-top: 9.5px; }
.drawer li { height: 51.3px; padding-left: 16px; display: flex; align-items: center; gap: 35px; font: 500 15.4px/20px Roboto, sans-serif; letter-spacing: .1px; }
.drawer li svg { width: 26px; height: 26px; }
.drawer .gap { margin-top: 51.3px; }
.dim { flex: 1; background: #666; display: flex; flex-direction: column; color: #3b3b3b; }
.dimbar { height: 61.5px; padding-left: 53px; display: flex; align-items: center; gap: 31px; background: #626262; box-shadow: 0 1px 2px rgba(0,0,0,.4); font: 17px Roboto, sans-serif; }
.dimbtns { height: 184px; margin-top: auto; padding: 8px 7px 0 0; display: flex; flex-direction: column; gap: 5px; border-top: 1px solid #444; background: #626262; }
.dimbtns span { height: 52px; border-radius: 0 4px 4px 0; background: #004d40; color: #5f7f79; font-size: 15.2px; line-height: 50px; padding-left: 1px; }

/* profile */
.p-profile .status { height: 24px; }
.hero { position: relative; height: 202px; background: #efefef; display: grid; }
.hero > * { grid-area: 1 / 1; }
.hero .i-back { margin: 22px 0 0 21px; }
.hero .fr { width: 112px; height: 109px; margin: 33px auto 0; font-size: 20px; }
.edit { position: absolute; left: 379px; top: 171px; width: 62px; height: 61px; border-radius: 50%; background: #efefef; box-shadow: 0 2px 6px rgba(0,0,0,.25); display: grid; place-items: center; }
.edit svg { width: 26px; height: 26px; }
.p-profile h2 { height: 97px; padding-left: 17px; font-weight: 400; font-size: 26.4px; line-height: 97px; }
dl { margin: 0 18px 0 16px; border-top: 2px solid #b3b3b3; }
dl div { padding-left: 23px; line-height: 20px; }
dt { font-size: 15.3px; }
dd { font-size: 18.7px; }
.f1 { padding-top: 8px; } .f1 dd { margin-top: 17px; }
.f2 { padding-top: 33px; padding-bottom: 11px; border-bottom: 1px solid #b3b3b3; } .f2 dd { margin-top: 14px; }
.f3 { padding-top: 10px; padding-bottom: 9px; border-bottom: 3px solid #b3b3b3; } .f3 dd { margin-top: 14px; }
.f4 { padding-top: 9px; padding-bottom: 11px; border-bottom: 2px solid #b3b3b3; } .f4 dd { margin-top: 17px; }

/* tracker and daily data */
.p-tracker .status { height: 20px; }
.p-tracker .bar { height: 63px; padding-right: 16px; padding-top: 3px; }
.gear { width: 22px; height: 22px; margin-left: auto; }
.date { flex: none; height: 54px; display: grid; align-items: center; justify-items: center; font-size: 17.75px; }
.date > * { grid-area: 1 / 1; }
.i-left { width: 11px; height: 19px; justify-self: start; margin-left: 19px; }
.cards { position: relative; flex: 1; padding: 10px 11px 0 9px; background: #efefef; }
.card { background: #fff; overflow: hidden; }
.feel { height: 369px; }
.feel h3 { padding: 7px 0 0 12px; height: 38px; font-size: 19.7px; line-height: 27px; }
.chart { width: 436px; height: 331px; }
.lbl { font-family: "Open Sans", sans-serif; font-size: 11.8px; fill: #6b6b6b; }
.mid { text-anchor: middle; font-size: 11.5px; }
.sync { position: relative; height: 135px; margin-top: 10px; }
.ghost { padding: 10px 0 0 11px; font-size: 19px; line-height: 27px; color: #ddd; }
.ghost b { display: block; font-size: 16px; color: #e2e2e2; }
.ghost .avg { padding-top: 4px; font-size: 16px; color: #eee; }
.ghost i { font-style: normal; color: #c8c8c8; margin-left: 4px; }
.over { position: absolute; inset: 24px 0 0; text-align: center; font-weight: 700; font-size: 15.6px; line-height: 21px; color: #2b2b2b; }
.over a { display: block; margin-top: 32px; font-size: 20px; line-height: 28px; color: #00b69b; text-decoration: underline; }
.fab { position: absolute; left: 383px; top: 527px; width: 62px; height: 62px; border-radius: 50%; box-shadow: 0 3px 6px rgba(0,0,0,.4); background: linear-gradient(#fff,#fff) center / 24px 6px no-repeat, linear-gradient(#fff,#fff) center / 6px 24px no-repeat, #00b69b; }
.p-tracker .nav { height: 52px; }

.p-daily .status { height: 27px; }
.p-daily .bar { height: 64px; padding-top: 2px; }
.p-daily .date { height: 58px; }
.p-daily .cards { padding-top: 12px; }
.mood { height: 265px; margin-left: 1px; color: #b8b8b8; }
.mood h3 { padding-left: 11px; font-size: 17.4px; line-height: 51px; height: 50px; color: #333; }
.faces { height: 164px; padding: 33px 21px 0 22px; display: grid; grid-template-columns: repeat(4, 1fr); justify-items: center; border-bottom: 1px solid #eee; font-size: 14.7px; line-height: 20px; }
.faces div { display: flex; flex-direction: column; align-items: center; gap: 25px; }
.faces svg { width: 49px; height: 52px; }
.faces .on { color: #333; }
.note { padding-left: 11px; font-size: 18.4px; line-height: 53px; color: #e3e3e3; }
.steps { height: 128px; margin: 13px 0 0 1px; padding: 3px 16px 0 11px; font-size: 14.7px; color: #333; }
.steps div { height: 42px; display: flex; align-items: center; justify-content: flex-end; gap: 21px; }
.steps .s0 { justify-content: space-between; }
.steps span { font-weight: 600; font-size: 11.6px; color: #666; }
.p-daily .nav { height: 55px; }

/* speak to a doctor */
.p-doctor .status { height: 28px; }
.p-doctor .bar { height: 66px; padding-left: 23px; }
.p-doctor .bar h1 { margin-left: 38px; }
.p-doctor .band { height: 44px; line-height: 57px; font-size: 15.3px; }
.intro { height: 102px; padding: 19px 0 0 18px; font-size: 15.5px; line-height: 22.6px; }
.p-doctor .scroll { flex: 1; }
.p-doctor h4 { height: 27px; padding-left: 18px; border-bottom: 2px solid #666; font: 500 16.4px/23px Roboto, sans-serif; }
.p-doctor article { height: 200.500px; display: flex; padding: 20px 0 0 18px; }
.round { flex: none; width: 132px; height: 141px; }
.p-doctor .txt { width: 254px; margin-left: 13px; }
.p-doctor .txt h5 { margin-top: -7px; }
.p-doctor .txt p { margin-top: 14px; font-size: 15.5px; line-height: 22.6px; }
.p-doctor .i-right { margin-top: 60px; }
.p-doctor .nav, .p-altibbi .nav { height: 56px; }

/* altibbi details */
.p-altibbi .status { height: 27px; }
.p-altibbi .bar { height: 66px; padding-left: 22px; }
.p-altibbi .bar h1 { margin-left: 40px; }
.p-altibbi .scroll { padding-left: 17px; }
.copy { font-size: 15.5px; line-height: 22.75px; }
.p-altibbi .copy { margin-top: -9px; }
.go { display: flex; align-items: center; }
.gobox { border: 2px solid #83dacb; }
.gobox h5 { display: flex; align-items: center; }
.gobox p { background: #edf5f4; }
.go .i-right { width: 9px; height: 13px; }
.p-altibbi .go { gap: 5px; margin-top: 17px; }
.p-altibbi .gobox { width: 409px; height: 142px; border-right-width: 3px; }
.p-altibbi .gobox h5 { height: 60px; padding-left: 9px; gap: 11px; font-size: 15.500px; }
.i-chat { width: 25px; height: 20px; color: #00897b; }
.p-altibbi .gobox p { height: 78px; padding: 11px 0 0 11px; font-size: 15.5px; line-height: 22.75px; }
.p-altibbi .brand { width: 380px; height: 118px; margin: 17px 0 0 21px; border: solid #003f87; border-width: 3px 0; display: grid; place-items: center; padding-top: 2px; }
.p-altibbi .brand svg { width: 242px; height: 82px; }

/* health a-z */
.p-az .bar h1 { margin-left: 55px; }
.p-az .bar { padding-right: 16px; }
.search { width: 20px; height: 20px; margin-left: auto; }
.azbody { flex: 1; min-height: 0; overflow: hidden; display: flex; }
.azbody ul { width: 409px; font-size: 19.3px; }
.azbody li { height: 60.4px; padding-left: 16px; line-height: 62px; }
.azbody .letter { height: 64px; line-height: 67px; color: #00b69b; font-weight: 500; border-bottom: 1px solid #eee; }
.track { width: 3px; height: 612px; margin: 20px 0 0 16px; background: linear-gradient(transparent 30px, #00b69b 30px); }
.track i { display: block; width: 7px; height: 34px; margin-left: -2px; border-radius: 2px; background: #efefef; }

/* one stop health */
.p-onestop .status { height: 24px; }
.p-onestop .bar { height: 60px; padding-left: 22px; }
.p-onestop .band { height: 38px; line-height: 52px; font-size: 15.2px; }
.p-onestop article { flex: none; height: 184px; display: flex; padding-left: 17px; border-bottom: 2px solid #e6e6e6; }
.pic { width: 145px; height: 184px; }
.p-onestop .txt { flex: 1; margin-left: 11px; padding-top: 12px; }
.p-onestop .txt p { margin-top: 9.5px; font-size: 15.8px; line-height: 20.3px; }
.row { height: 38px; padding: 0 18px 0 6px; display: flex; align-items: center; justify-content: space-between; }
.i-head { width: 18px; height: 21px; color: #00897b; margin-left: 2px; }
.i-meds { width: 22px; height: 18px; }
.i-pulse { width: 23px; height: 15px; }
.p-onestop .band.last { flex: 1; line-height: 58px; }
.p-onestop .nav { height: 49px; }

/* addicaid details */
.p-addicaid .band { height: 39px; line-height: 54px; padding-left: 16px; }
.p-addicaid .head { flex: none; height: 62px; margin: 0 5px 0 4px; padding-left: 12px; border-bottom: 1px solid #333; line-height: 58px; }
.p-addicaid .scroll { padding: 23px 0 0 16px; }
.p-addicaid .copy { font-size: 15.8px; line-height: 20.63px; }
.p-addicaid .go { margin-top: 16px; gap: 8px; }
.p-addicaid .gobox { width: 416px; height: 127px; border-width: 1px 1px 1px 3px; }
.p-addicaid .gobox h5 { height: 64px; padding-left: 10px; gap: 16px; }
.p-addicaid .gobox p { height: 61px; padding: 10px 0 0 11px; font-size: 15.8px; }
.p-addicaid .go .i-right { width: 7px; height: 12px; }
.p-addicaid .brand { width: 388px; margin: 16px 0 0 21px; border-top: 2px solid #ff9800; }
.p-addicaid .brand svg { width: 388px; height: 66px; }
.p-addicaid .nav, .p-goals .nav { height: 50px; }

/* health goals */
.top { flex: none; height: 229px; background: #efefef; font-size: 18.400px; line-height: 22.9px; }
.top p { margin: 14px 0 0 18.500px; }
.top .second { margin-top: 22.500px; }
.goal { display: flex; justify-content: space-between; border-bottom: 1px solid #e9e9e9; padding: 16px 0 0 18.500px; }
.goal h5 { font: 400 18.3px/25px "Open Sans", sans-serif; color: #333; }
.goal p { margin-top: 3px; font-size: 16.2px; line-height: 20.35px; }
.g1 { height: 122.500px; }
.g2, .g3 { height: 143.500px; }
.g4 { height: 143px; }
.toggle { position: relative; width: 36px; height: 14px; margin: 8px 32px 0 0; border-radius: 7px; background: #f5f5f5; }
.toggle::before { content: ""; position: absolute; left: 0; top: -4px; width: 23px; height: 21px; border-radius: 50%; background: #dfdfdf; box-shadow: 0 1px 1px rgba(0,0,0,.15); }
.toggle.on { margin-right: 23px; background: #b0e8df; }
.toggle.on::before { left: 13px; background: #00b69b; }
```
